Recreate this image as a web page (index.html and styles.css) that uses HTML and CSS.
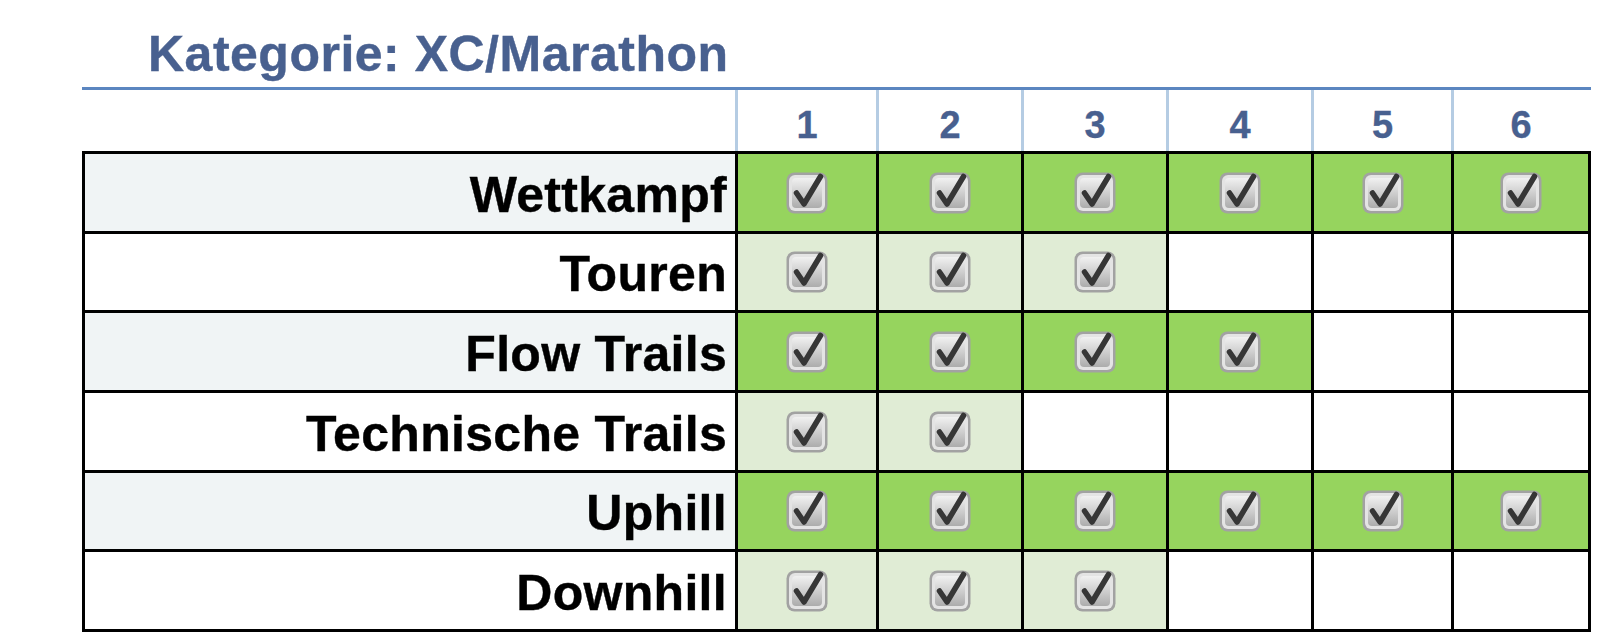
FILE: index.html
```html
<!DOCTYPE html>
<html lang="de">
<head>
<meta charset="utf-8">
<title>Kategorie: XC/Marathon</title>
<link rel="stylesheet" href="styles.css">
</head>
<body>
<svg class="defs" width="0" height="0" aria-hidden="true">
  <defs>
    <linearGradient id="chkfill" x1="0" y1="0" x2="0" y2="1">
      <stop offset="0" stop-color="#f1f1f1"/>
      <stop offset="1" stop-color="#acacac"/>
    </linearGradient>
    <symbol id="chk" viewBox="0 0 42 42">
      <rect x="0.5" y="0.5" width="41" height="41" rx="8" fill="#a2a2a2"/>
      <rect x="3" y="3" width="36" height="36" rx="6" fill="#e4e4e4"/>
      <rect x="6" y="6" width="30" height="30" rx="4" fill="url(#chkfill)"/>
      <path d="M10.5 21 L18 32 L34.5 4.5" stroke="#363636" stroke-width="5.5" fill="none" stroke-linecap="round" stroke-linejoin="round"/>
    </symbol>
  </defs>
</svg>

<div class="sheet">
  <h1 class="title">Kategorie: XC/Marathon</h1>

  <div class="head">
    <div class="head-blank"></div>
    <div class="num">1</div>
    <div class="num">2</div>
    <div class="num">3</div>
    <div class="num">4</div>
    <div class="num">5</div>
    <div class="num last">6</div>
  </div>

  <div class="grid">
    <div class="label shade">Wettkampf</div>
    <div class="cell on"><svg class="chk"><use href="#chk"/></svg></div>
    <div class="cell on"><svg class="chk"><use href="#chk"/></svg></div>
    <div class="cell on"><svg class="chk"><use href="#chk"/></svg></div>
    <div class="cell on"><svg class="chk"><use href="#chk"/></svg></div>
    <div class="cell on"><svg class="chk"><use href="#chk"/></svg></div>
    <div class="cell on"><svg class="chk"><use href="#chk"/></svg></div>

    <div class="label">Touren</div>
    <div class="cell soft"><svg class="chk"><use href="#chk"/></svg></div>
    <div class="cell soft"><svg class="chk"><use href="#chk"/></svg></div>
    <div class="cell soft"><svg class="chk"><use href="#chk"/></svg></div>
    <div class="cell"></div>
    <div class="cell"></div>
    <div class="cell"></div>

    <div class="label shade">Flow Trails</div>
    <div class="cell on"><svg class="chk"><use href="#chk"/></svg></div>
    <div class="cell on"><svg class="chk"><use href="#chk"/></svg></div>
    <div class="cell on"><svg class="chk"><use href="#chk"/></svg></div>
    <div class="cell on"><svg class="chk"><use href="#chk"/></svg></div>
    <div class="cell"></div>
    <div class="cell"></div>

    <div class="label">Technische Trails</div>
    <div class="cell soft"><svg class="chk"><use href="#chk"/></svg></div>
    <div class="cell soft"><svg class="chk"><use href="#chk"/></svg></div>
    <div class="cell"></div>
    <div class="cell"></div>
    <div class="cell"></div>
    <div class="cell"></div>

    <div class="label shade">Uphill</div>
    <div class="cell on"><svg class="chk"><use href="#chk"/></svg></div>
    <div class="cell on"><svg class="chk"><use href="#chk"/></svg></div>
    <div class="cell on"><svg class="chk"><use href="#chk"/></svg></div>
    <div class="cell on"><svg class="chk"><use href="#chk"/></svg></div>
    <div class="cell on"><svg class="chk"><use href="#chk"/></svg></div>
    <div class="cell on"><svg class="chk"><use href="#chk"/></svg></div>

    <div class="label">Downhill</div>
    <div class="cell soft"><svg class="chk"><use href="#chk"/></svg></div>
    <div class="cell soft"><svg class="chk"><use href="#chk"/></svg></div>
    <div class="cell soft"><svg class="chk"><use href="#chk"/></svg></div>
    <div class="cell"></div>
    <div class="cell"></div>
    <div class="cell"></div>
  </div>
</div>
</body>
</html>
```
FILE: styles.css
```css
html, body {
  margin: 0;
  padding: 0;
  background: #ffffff;
}

body {
  font-family: "Liberation Sans", Arial, sans-serif;
}

.defs {
  position: absolute;
  width: 0;
  height: 0;
  overflow: hidden;
}

.sheet {
  margin-left: 82px;
  width: 1509px;
}

.title {
  margin: 0;
  padding: 29px 0 0 66px;
  height: 50px;
  font-size: 50px;
  line-height: 50px;
  font-weight: 700;
  color: #48608f;
  letter-spacing: 0.5px;
  -webkit-text-stroke: 0.4px #48608f;
}

.head {
  margin-top: 8px;
  display: grid;
  grid-template-columns: 653px 141px 145px 145px 145px 140px 140px;
  height: 61px;
  border-top: 3px solid #5b86c0;
}

.num {
  border-left: 3px solid #b5cce3;
  display: flex;
  align-items: center;
  justify-content: center;
  font-size: 38px;
  font-weight: 700;
  color: #48608f;
  padding-top: 9px;
  -webkit-text-stroke: 0.3px #48608f;
}

.num.last {
  padding-right: 3px;
}

.grid {
  display: grid;
  grid-template-columns: 650px 138px 142px 142px 142px 137px 134px;
  grid-template-rows: 77px 76px 77px 77px 76px 77px;
  gap: 3px;
  padding: 3px;
  background: #000000;
}

.label {
  background: #ffffff;
  display: flex;
  align-items: center;
  justify-content: flex-end;
  padding-right: 8px;
  padding-top: 4px;
  font-size: 50px;
  font-weight: 700;
  color: #000000;
  letter-spacing: 0.3px;
  -webkit-text-stroke: 0.4px #000000;
}

.label.shade {
  background: #f0f4f5;
}

.cell {
  background: #ffffff;
  display: flex;
  align-items: center;
  justify-content: center;
}

.cell.on {
  background: #96d45e;
}

.cell.soft {
  background: #e0ecd5;
}

.chk {
  width: 42px;
  height: 42px;
  display: block;
}
```
